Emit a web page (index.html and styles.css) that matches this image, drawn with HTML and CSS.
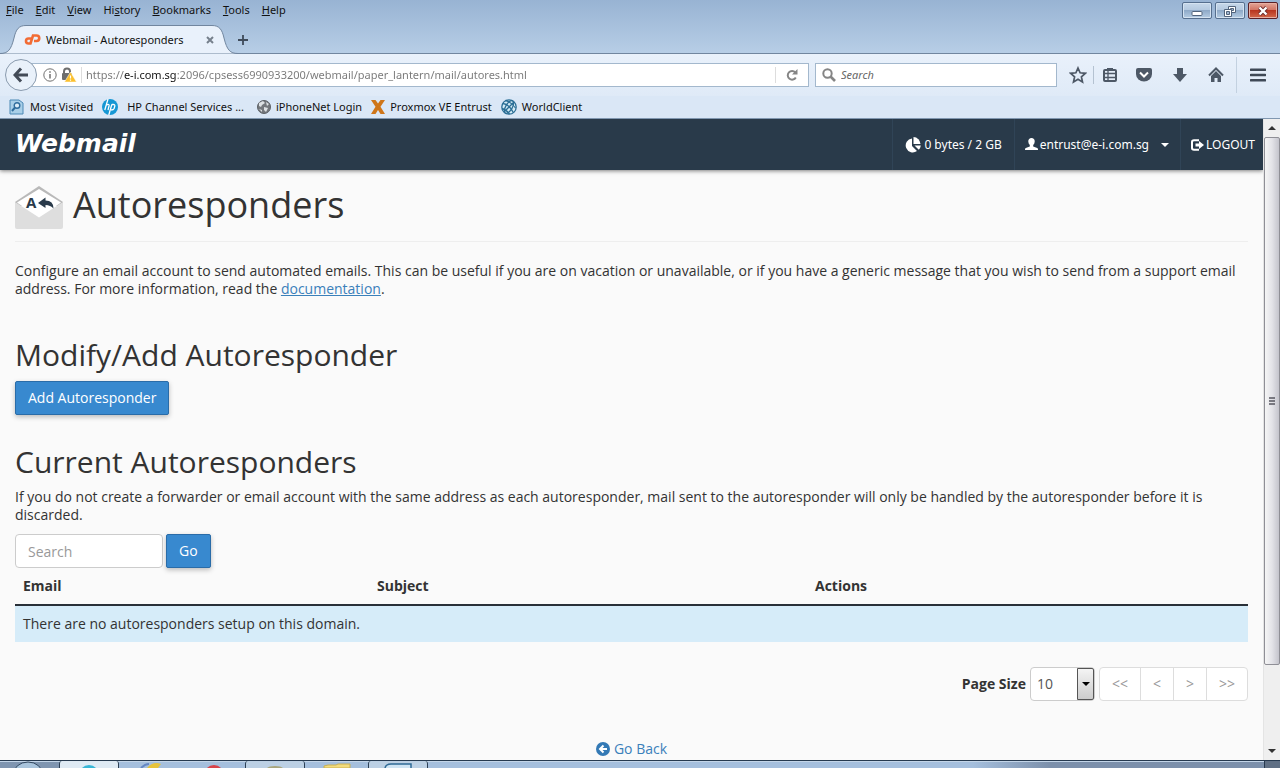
FILE: index.html
```html
<!DOCTYPE html>
<html lang="en">
<head>
    <meta charset="UTF-8">
    <title>Webmail - Autoresponders</title>
    <link rel="stylesheet" href="styles.css">
</head>
<body>
    <header class="browser">
        <div class="menubar">
            <nav class="menus">
                <button class="menu"><u>F</u>ile</button>
                <button class="menu"><u>E</u>dit</button>
                <button class="menu"><u>V</u>iew</button>
                <button class="menu">Hi<u>s</u>tory</button>
                <button class="menu"><u>B</u>ookmarks</button>
                <button class="menu"><u>T</u>ools</button>
                <button class="menu"><u>H</u>elp</button>
            </nav>
            <div class="window-buttons">
                <button class="win-btn" aria-label="Minimize">
                    <svg width="12" height="12" viewBox="0 0 12 12"><rect x="1" y="6.5" width="10" height="4" rx="1" fill="#fff" stroke="#52647c"/></svg>
                </button>
                <button class="win-btn" aria-label="Restore">
                    <svg width="12" height="12" viewBox="0 0 12 12"><path d="M4.5 1.500h7v6h-7z" fill="#fff" stroke="#52647c"/><path d="M6.500 3.500h3v2h-3z" fill="#9fb6d0" stroke="#52647c"/><path d="M.5 4.500h7v7h-7z" fill="#fff" stroke="#52647c"/><path d="M2.500 6.500h3v3h-3z" fill="#9fb6d0" stroke="#52647c"/></svg>
                </button>
                <button class="win-btn win-close" aria-label="Close">
                    <svg width="12" height="10" viewBox="0 0 12 10"><path d="M2.500 1.500l7 7M9.500 1.500l-7 7" stroke="#6a2a2a" stroke-width="4"/><path d="M2.500 1.500l7 7M9.500 1.500l-7 7" stroke="#fff" stroke-width="2.400"/></svg>
                </button>
            </div>
        </div>

        <div class="tabstrip">
            <div class="tab">
                <svg class="tab-shape" width="238" height="29" viewBox="0 0 238 29"><path d="M0 28.500C8 28.500 11 25 14 13C16 4 19 .5 26 .5H212C219 .5 222 4 224 13C227 25 230 28.500 238 28.500" fill="#e9f1fb" stroke="#71869f"/></svg>
                <svg class="tab-logo" width="17" height="12" viewBox="0 0 17 12" fill="none" stroke="#f26c35" stroke-width="2.600"><path d="M7.500 4.500H4.500a2.500 2.500 0 0 0 0 5H6.500L9 1.500H12.500a2.700 2.700 0 0 1 0 5.500H10"/></svg>
                <span class="tab-title">Webmail - Autoresponders</span>
                <button class="tab-close" aria-label="Close tab">
                    <svg width="8" height="8" viewBox="0 0 8 8"><path d="M1 1l6 6M7 1l-6 6" stroke="#76808c" stroke-width="2"/></svg>
                </button>
            </div>
            <button class="new-tab" aria-label="New tab">
                <svg width="10" height="10" viewBox="0 0 10 10"><path d="M5 0v10M0 5h10" stroke="#3f4b5a" stroke-width="1.800"/></svg>
            </button>
        </div>

        <div class="toolbar">
            <button class="back" aria-label="Back">
                <svg width="16" height="16" viewBox="0 0 16 16"><path d="M8 1.500L2 8l6 6.500M2.500 8H15" fill="none" stroke="#434b57" stroke-width="3"/></svg>
            </button>
            <div class="urlbar">
                <svg width="14" height="14" viewBox="0 0 14 14"><circle cx="7" cy="7" r="6.200" fill="none" stroke="#707070"/><path d="M7 6v4.500M7 3.200v1.600" stroke="#707070" stroke-width="1.500"/></svg>
                <svg width="16" height="16" viewBox="0 0 16 16"><path d="M3 7V4.500a3 3 0 0 1 6 0V7" fill="none" stroke="#6e6e6e" stroke-width="2"/><rect x="1" y="6" width="10" height="7" rx="1" fill="#6e6e6e"/><path d="M9.500 5L15.500 15h-12z" fill="#fbc02d" stroke="#fff" stroke-width=".5"/><path d="M9.500 8.500v3M9.500 12.500v1.200" stroke="#fff" stroke-width="1.200"/></svg>
                <span class="url-split"></span>
                <input class="url" type="text" aria-label="Address" value="https://e-i.com.sg:2096/cpsess6990933200/webmail/paper_lantern/mail/autores.html">
                <button class="reload" aria-label="Reload">
                    <svg width="12" height="12" viewBox="0 0 12 12"><path d="M9.800 8.500A4.300 4.300 0 1 1 9.300 3.500" fill="none" stroke="#858585" stroke-width="2"/><path d="M11.500 0v5.500H6z" fill="#858585"/></svg>
                </button>
            </div>
            <div class="searchbar">
                <svg width="14" height="14" viewBox="0 0 14 14" fill="none" stroke="#858585"><circle cx="5.500" cy="5.500" r="4.200" stroke-width="2"/><path d="M8.500 8.500l4.500 4.500" stroke-width="2.600"/></svg>
                <input class="browser-search" type="text" aria-label="Browser search" placeholder="Search">
            </div>
            <div class="tools">
                <button class="tool tool-star" aria-label="Bookmark this page">
                    <svg width="18" height="18" viewBox="0 0 18 18"><path d="M9 2l2.100 4.800 5.200.5-3.900 3.500 1.100 5.200L9 13.300 4.500 16l1.100-5.200L1.700 7.300l5.200-.5z" fill="none" stroke="#4d5866" stroke-width="1.700"/></svg>
                </button>
                <button class="tool" aria-label="Show bookmarks">
                    <svg width="16" height="16" viewBox="0 0 16 16"><path d="M5 3V1h6v2" fill="#4d5866"/><rect x="2" y="3" width="12" height="11" rx="1" fill="none" stroke="#4d5866" stroke-width="2"/><path d="M1 6.500h14M1 10.500h14M6 4v10" stroke="#4d5866" stroke-width="1.300"/></svg>
                </button>
                <button class="tool" aria-label="Pocket">
                    <svg width="16" height="16" viewBox="0 0 16 16"><path d="M0 3q0-2 2-2h12q2 0 2 2v4a8 7.500 0 0 1-16 0z" fill="#4d5866"/><path d="M4 5.500l4 4 4-4" fill="none" stroke="#fff" stroke-width="2"/></svg>
                </button>
                <button class="tool" aria-label="Downloads">
                    <svg width="16" height="16" viewBox="0 0 16 16"><path d="M5 1h6v6h4l-7 8-7-8h4z" fill="#4d5866"/></svg>
                </button>
                <button class="tool" aria-label="Home">
                    <svg width="16" height="16" viewBox="0 0 16 16"><path d="M1 8.500l7-7 7 7" fill="none" stroke="#4d5866" stroke-width="2"/><path d="M8 4l5 5v6H9.500v-4h-3v4H3V9z" fill="#4d5866"/></svg>
                </button>
                <button class="tool tool-menu" aria-label="Open menu">
                    <svg width="16" height="14" viewBox="0 0 16 14"><path d="M1 1.800h14M1 7h14M1 12.200h14" stroke="#3f4956" stroke-width="2.600" stroke-linecap="round"/></svg>
                </button>
            </div>
        </div>

        <nav class="bookmarks">
            <a href="#" class="bookmark">
                <svg width="16" height="16" viewBox="0 0 16 16"><path d="M1 1h9l4 3v11H1z" fill="#a9cfe8" stroke="#4b88b5"/><circle cx="8" cy="6.500" r="2.800" fill="#dcecf7" stroke="#2f6c9c" stroke-width="1.400"/><path d="M6 8.500L3 12" stroke="#2f6c9c" stroke-width="2"/></svg>
                Most Visited
            </a>
            <a href="#" class="bookmark bookmark-hp">
                <svg width="16" height="16" viewBox="0 0 16 16"><circle cx="8" cy="8" r="8" fill="#1597d4"/><path d="M6 0L2.800 11M4.500 6q3-1.500 2.500 1L6 11M9.800 5.500L6.800 16M9.800 5.500h1.500q2 0 1.400 2l-.6 2q-.6 1.500-3 1.500" fill="none" stroke="#fff" stroke-width="1.300"/></svg>
                HP Channel Services ...
            </a>
            <a href="#" class="bookmark">
                <svg width="14" height="14" viewBox="0 0 14 14"><circle cx="7" cy="7" r="6.500" fill="#74787d" stroke="#5c6065"/><path d="M2 3l4-2 2 2-3 2-1 2-2-1zM9 2l3 2-2 2zM7 7l4 1-2 4-2-2zM2 9l3 1v2z" fill="#dde1e4"/></svg>
                iPhoneNet Login
            </a>
            <a href="#" class="bookmark">
                <svg width="14" height="14" viewBox="0 0 14 14"><path d="M0 0h4.500L7 3.500 9.500 0H14L9.500 6.800 14 14H9.500L7 10l-2.500 4H0l4.500-7.200z" fill="#cf7619"/></svg>
                Proxmox VE Entrust
            </a>
            <a href="#" class="bookmark">
                <svg width="16" height="16" viewBox="0 0 16 16" fill="none" stroke="#2c6f96" stroke-width="1.300"><circle cx="8" cy="8" r="7.200" fill="#d5ecf6"/><ellipse cx="8" cy="8" rx="3.300" ry="7.200" transform="rotate(30 8 8)"/><path d="M1.800 4.500q6 .5 10.500 9M4.500 1.500q6 1.500 10 7.500M1 9.500q4 1 7.500 5.500M3 13L13 3"/></svg>
                WorldClient
            </a>
        </nav>
    </header>

    <div class="viewport">
        <div class="page">
            <div class="topbar">
                <a href="#" class="brand">Webmail</a>
                <div class="quota">
                    <svg width="16" height="16" viewBox="0 0 16 16" fill="#fff"><path d="M7 1.500V9l5 5a7 7 0 1 1-5-12.500z"/><path d="M8.500 0a7.300 7.300 0 0 1 7 7h-7z"/><path d="M9.500 8.500h6.300a7 7 0 0 1-2 4.300z"/></svg>
                    0 bytes / 2 GB
                </div>
                <button class="account">
                    <svg width="13" height="13" viewBox="0 0 13 13"><path d="M6.500 0a3.200 3.200 0 0 1 3.200 3.500q0 2-1.500 3.500v1.500l4 1.500q.8.400.8 1.500v.5H0v-.5q0-1.100.8-1.500l4-1.500V7Q3.300 5.500 3.300 3.500A3.200 3.200 0 0 1 6.500 0z" fill="#fff"/></svg>
                    entrust@e-i.com.sg
                    <svg class="caret" width="8" height="4" viewBox="0 0 8 4"><path d="M0 0h8L4 4z" fill="#fff"/></svg>
                </button>
                <a href="#" class="logout">
                    <svg width="13" height="12" viewBox="0 0 13 12"><path d="M8 1.200H3Q1 1.200 1 3v6q0 1.800 2 1.800h5" fill="none" stroke="#fff" stroke-width="2"/><path d="M4.500 4.500H8V2l5 4-5 4V7.500H4.500z" fill="#fff"/></svg>
                    LOGOUT
                </a>
            </div>

            <main class="content">
                <h1 class="page-title">
                    <svg width="48" height="44" viewBox="0 0 48 44"><path d="M0 16L24 0l24 16v4H0z" fill="#b9b9b9"/><path d="M2 16.500L24 3l22 13.500L24 32z" fill="#fff"/><path d="M0 16l24 15.500L48 16v25q0 2-2 2H2q-2 0-2-2z" fill="#dedede"/><path d="M23 17l7.500-5.500v3q8 0 8 8-3-3.500-8-3.500v3z" fill="#293a4a"/><text x="11" y="22" class="icon-letter">A</text></svg>
                    Autoresponders
                </h1>
                <p class="intro">Configure an email account to send automated emails. This can be useful if you are on vacation or unavailable, or if you have a generic message that you wish to send from a support email address. For more information, read the <a href="#">documentation</a>.</p>

                <section class="section">
                    <h2>Modify/Add Autoresponder</h2>
                    <button class="btn">Add Autoresponder</button>
                </section>

                <section class="section">
                    <h2>Current Autoresponders</h2>
                    <p class="note">If you do not create a forwarder or email account with the same address as each autoresponder, mail sent to the autoresponder will only be handled by the autoresponder before it is discarded.</p>
                    <form class="search-form">
                        <input class="field" type="text" aria-label="Search autoresponders" placeholder="Search">
                        <button type="button" class="btn">Go</button>
                    </form>
                    <table class="responders">
                        <thead>
                            <tr>
                                <th class="col-email">Email</th>
                                <th class="col-subject">Subject</th>
                                <th>Actions</th>
                            </tr>
                        </thead>
                        <tbody>
                            <tr>
                                <td colspan="3">There are no autoresponders setup on this domain.</td>
                            </tr>
                        </tbody>
                    </table>
                    <div class="pager">
                        <label for="pageSize">Page Size</label>
                        <span class="select-box">
                            <select id="pageSize">
                                <option>10</option>
                                <option>20</option>
                                <option>50</option>
                            </select>
                        </span>
                        <div class="pages">
                            <button>&lt;&lt;</button>
                            <button>&lt;</button>
                            <button>&gt;</button>
                            <button>&gt;&gt;</button>
                        </div>
                    </div>
                </section>

                <a href="#" class="go-back">
                    <svg width="14" height="14" viewBox="0 0 14 14"><circle cx="7" cy="7" r="7" fill="#3379b5"/><path d="M7.500 3.500L4 7l3.500 3.500M4 7h7" fill="none" stroke="#fff" stroke-width="2"/></svg>
                    Go Back
                </a>
            </main>
        </div>

        <div class="scrollbar">
            <svg class="scroll-arrow" width="8" height="4" viewBox="0 0 8 4"><path d="M0 4h8L4 0z" fill="#333"/></svg>
            <div class="scroll-thumb">
                <svg width="6" height="8" viewBox="0 0 6 8"><path d="M0 1h6M0 4h6M0 7h6" stroke="#55555f" stroke-width="1.500"/></svg>
            </div>
            <svg class="scroll-arrow" width="8" height="4" viewBox="0 0 8 4"><path d="M0 0h8L4 4z" fill="#333"/></svg>
        </div>
    </div>

    <footer class="taskbar">
        <div class="task task-start"><svg width="30" height="7" viewBox="0 0 30 7"><ellipse cx="15" cy="14" rx="15" ry="13" fill="#a9c4dc" stroke="#30465e"/></svg></div>
        <div class="task task-open"><svg width="20" height="7" viewBox="0 0 20 7"><circle cx="10" cy="14" r="10" fill="#38b6d6"/></svg></div>
        <div class="task"><svg width="24" height="7" viewBox="0 0 24 7"><path d="M2 7q4-4 8-4" fill="none" stroke="#6487c4" stroke-width="2"/><path d="M8 7q6-7 14-4l-3 4z" fill="#e6c33c"/></svg></div>
        <div class="task"><svg width="18" height="7" viewBox="0 0 18 7"><circle cx="9" cy="14" r="10" fill="#d8434a"/></svg></div>
        <div class="task task-active"><svg width="16" height="7" viewBox="0 0 16 7"><path d="M0 7q2-2 8-2t8 2z" fill="#a9a67c"/></svg></div>
        <div class="task"><svg width="28" height="7" viewBox="0 0 28 7"><path d="M1 7V5l4-1h8l2-1h12v4z" fill="#f3dc7d" stroke="#c9b053"/></svg></div>
        <div class="task task-active"><svg width="28" height="7" viewBox="0 0 28 7"><path d="M1 7q1-4 6-4h20v4" fill="#cfe4f4" stroke="#2f6a95" stroke-width="1.500"/></svg></div>
        <div class="task-space"></div>
        <div class="show-desktop"></div>
    </footer>
</body>
</html>
```

FILE: styles.css
```css
* {
    margin: 0;
    padding: 0;
    box-sizing: border-box;
}

body {
    display: flex;
    flex-direction: column;
    height: 100vh;
    overflow: hidden;
    background: #fafafa;
    font-family: "Open Sans", sans-serif;
    font-size: 14px;
    line-height: 18px;
    color: #333;
}

button,
input,
select {
    font: inherit;
    color: inherit;
    border: none;
    background: none;
}

svg {
    display: block;
    flex-shrink: 0;
}

/* Browser window */
.browser {
    flex-shrink: 0;
    background: linear-gradient(180deg, #98b3d3 0, #b7cee6 53px);
    font-family: "Noto Sans", sans-serif;
    font-size: 11px;
    line-height: 16px;
    color: #111;
    border-bottom: 1px solid #8097b0;
}

.menubar {
    display: flex;
    justify-content: space-between;
    height: 25px;
}

.menus {
    display: flex;
    gap: 12px;
    align-items: flex-start;
    padding: 2px 6px;
}

.window-buttons {
    display: flex;
    gap: 3px;
    padding: 2px 2px 4px;
}

.win-btn {
    display: flex;
    align-items: center;
    justify-content: center;
    width: 30px;
    height: 17px;
    border: 1px solid #566f8e;
    border-radius: 2px;
    background: linear-gradient(180deg, #c7d8ea 0, #b3c8df 50%, #8faac8 50%, #b5cce3 100%);
    box-shadow: inset 0 0 0 1px #d5e3f1;
}

.win-close {
    border-color: #5b2027;
    background: linear-gradient(180deg, #e3a597 0, #d0705f 50%, #b83620 50%, #d3694c 100%);
    box-shadow: inset 0 0 0 1px #e7b0a3;
}

.tabstrip {
    display: flex;
    align-items: center;
    height: 29px;
    border-bottom: 1px solid #71869f;
}

.tab {
    position: relative;
    display: flex;
    align-items: center;
    width: 230px;
    height: 29px;
    padding: 2px 16px 0 24px;
}

.tab-shape {
    position: absolute;
    left: 0;
    top: 0;
}

.tab-logo,
.tab-title,
.tab-close {
    position: relative;
}

.tab-title {
    flex: 1;
    margin-left: 5px;
}

.new-tab {
    padding: 2px 8px 0;
}

.toolbar {
    display: flex;
    align-items: center;
    height: 42px;
    padding: 0 2px 0 5px;
    background: linear-gradient(180deg, #e9f1fb 0, #dfeaf7 100%);
}

.back {
    position: relative;
    display: flex;
    align-items: center;
    justify-content: center;
    width: 32px;
    height: 32px;
    margin-right: -16px;
    border: 1px solid #8a9bae;
    border-radius: 50%;
    background: #e9f1fa;
}

.urlbar {
    display: flex;
    flex: 1;
    align-items: center;
    gap: 4px;
    height: 24px;
    padding-left: 21px;
    border: 1px solid #a3b8cd;
    background: #fff;
}

.url-split {
    width: 1px;
    height: 16px;
    background: #ddd;
}

/* host name is drawn darker than the rest of the address */
.url {
    flex: 1;
    min-width: 0;
    background: linear-gradient(90deg, #777 38px, #111 38px, #111 91px, #777 91px);
    -webkit-background-clip: text;
    background-clip: text;
    -webkit-text-fill-color: transparent;
}

.reload {
    padding: 2px 10px;
    border-left: 1px solid #ddd;
}

.searchbar {
    display: flex;
    align-items: center;
    gap: 5px;
    width: 242px;
    height: 24px;
    margin-left: 6px;
    padding: 0 6px;
    border: 1px solid #a3b8cd;
    background: #fff;
}

.browser-search {
    flex: 1;
    min-width: 0;
}

.browser-search::placeholder {
    font-style: italic;
    color: #666;
    opacity: 1;
}

.tools {
    display: flex;
    align-items: center;
    height: 42px;
    margin-left: 12px;
}

.tool {
    display: flex;
    justify-content: center;
    width: 36px;
}

.tool-star {
    width: 25px;
    padding-right: 7px;
    border-right: 1px solid #b4c2d1;
}

.tool-star + .tool {
    width: 32px;
}

.tool-menu {
    align-items: center;
    width: 42px;
    height: 36px;
    margin-left: 2px;
    border-left: 1px solid #c3d1e0;
}

.bookmarks {
    display: flex;
    align-items: center;
    gap: 9px;
    height: 22px;
    padding: 0 9px;
    background: #dae7f6;
}

.bookmark {
    display: flex;
    align-items: center;
    gap: 5px;
    color: #111;
    text-decoration: none;
}

.bookmark-hp {
    gap: 9px;
    margin-right: 4px;
}

/* Page area */
.viewport {
    display: flex;
    flex: 1;
    min-height: 0;
}

.page {
    flex: 1;
    min-width: 0;
    overflow: hidden;
}

.topbar {
    display: flex;
    height: 51px;
    background: #293a4a;
    color: #fff;
    box-shadow: 0 1px 4px rgba(0, 0, 0, 0.5);
}

.brand {
    flex: 1;
    padding-left: 15px;
    font-family: "DejaVu Sans", sans-serif;
    font-size: 25px;
    font-weight: bold;
    font-style: italic;
    line-height: 50px;
    color: #fff;
    text-decoration: none;
}

.quota,
.account,
.logout {
    display: flex;
    align-items: center;
    gap: 3px;
    padding: 0 12px;
    border-left: 1px solid #304457;
    font-family: "Noto Sans", sans-serif;
    font-size: 12px;
    color: #fff;
    text-decoration: none;
}

.account {
    gap: 2px;
    padding: 0 11px 0 10px;
}

.logout {
    gap: 2px;
    padding: 0 8px 0 10px;
}

.caret {
    margin-left: 10px;
}

.content {
    padding: 15px 15px 0;
}

.page-title {
    display: flex;
    align-items: center;
    gap: 10px;
    height: 57px;
    padding-bottom: 16px;
    border-bottom: 1px solid #eee;
    font-size: 36px;
    font-weight: normal;
    line-height: 40px;
}

.page-title svg {
    margin-top: 6px;
}

.icon-letter {
    font-size: 15px;
    font-weight: bold;
    fill: #293a4a;
}

.intro {
    margin-top: 20px;
}

.content a {
    color: #3a80ba;
}

.section {
    margin-top: 30px;
}

.intro + .section {
    margin-top: 40px;
}

h2 {
    margin-bottom: 9px;
    font-size: 30px;
    font-weight: normal;
    line-height: 34px;
}

.btn {
    height: 34px;
    padding: 0 12px;
    border: 1px solid #2a6ca8;
    border-radius: 2px;
    background: #3889cf;
    color: #fff;
    box-shadow: 0 2px 5px rgba(0, 0, 0, 0.25);
}

.search-form {
    display: flex;
    gap: 3px;
    margin-top: 10px;
}

.field {
    width: 148px;
    height: 34px;
    padding: 0 12px;
    border: 1px solid #ccc;
    border-radius: 4px;
    background: #fff;
}

.field::placeholder {
    color: #999;
    opacity: 1;
}

.responders {
    width: 100%;
    border-collapse: collapse;
    text-align: left;
}

.responders th {
    height: 37px;
    padding: 0 8px;
    border-bottom: 2px solid #293038;
    font-weight: bold;
}

.responders td {
    height: 37px;
    padding: 0 8px;
    background: #d6ecf9;
}

.col-email {
    width: 354px;
}

.col-subject {
    width: 438px;
}

.pager {
    display: flex;
    align-items: center;
    justify-content: flex-end;
    gap: 4px;
    margin-top: 25px;
}

.pager label {
    font-weight: bold;
}

.select-box {
    position: relative;
}

.select-box select {
    display: block;
    width: 65px;
    height: 34px;
    padding: 0 6px;
    border: 1px solid #ccc;
    border-radius: 4px;
    background: #fff;
    color: #555;
    appearance: none;
}

.select-box::before {
    content: '';
    position: absolute;
    top: 1px;
    right: 1px;
    width: 17px;
    height: 32px;
    border: 1px solid #555;
    border-radius: 0 2px 2px 0;
    background: linear-gradient(180deg, #f4f4f4 0, #ccc 100%);
    box-sizing: border-box;
    pointer-events: none;
}

.select-box::after {
    content: '';
    position: absolute;
    top: 15px;
    right: 5px;
    border: 4px solid transparent;
    border-top-color: #000;
    border-bottom: none;
    pointer-events: none;
}

.pages {
    display: flex;
    border: 1px solid #ddd;
    border-radius: 4px;
    background: #fff;
}

.pages button {
    height: 32px;
    padding: 0 12px;
    color: #999;
}

.pages button + button {
    border-left: 1px solid #ddd;
}

.go-back {
    display: flex;
    align-items: center;
    justify-content: center;
    gap: 4px;
    margin-top: 39px;
    text-decoration: none;
}

/* Scrollbar */
.scrollbar {
    display: flex;
    flex-direction: column;
    width: 17px;
    border-left: 1px solid #e4e4e4;
    background: #efefef;
}

.scroll-arrow {
    margin: 7px auto;
}

.scroll-thumb {
    display: flex;
    flex: 1;
    align-items: center;
    justify-content: center;
    margin-bottom: 77px;
    border: 1px solid #8f8f96;
    border-radius: 2px;
    background: linear-gradient(90deg, #f5f5f5 0, #e3e3e8 50%, #c4c4cc 100%);
}

/* Taskbar */
.taskbar {
    display: flex;
    flex-shrink: 0;
    height: 8px;
    border-top: 1px solid #26394f;
    background: linear-gradient(90deg, #7f95b0 60px, #a5bfdd 61px, #a5bfdd 76%, #7c90ab 82%);
    box-shadow: inset 0 1px 0 #c3d5e8;
}

.task {
    display: flex;
    justify-content: center;
    width: 63px;
    overflow: hidden;
}

.task-start {
    width: 59px;
    padding-right: 4px;
}

.task-open,
.task-active {
    width: 60px;
    border: 1px solid #2c3f54;
    border-width: 0 1px;
    border-radius: 3px 3px 0 0;
    background: #dfeaf4;
}

.task-active {
    background: #bcd0e4;
}

.task-space {
    flex: 1;
}

.show-desktop {
    width: 16px;
    border-left: 1px solid #26394f;
    background: #5f6f84;
}
```
